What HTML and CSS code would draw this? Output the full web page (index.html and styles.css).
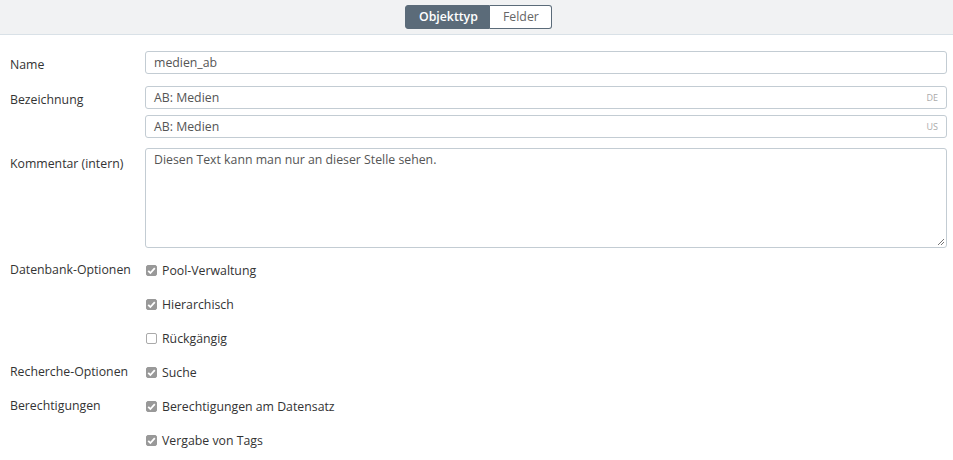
FILE: index.html
```html
<!DOCTYPE html>
<html lang="de">
<head>
<meta charset="utf-8">
<link rel="stylesheet" href="styles.css">
</head>
<body>
<div class="topbar">
  <div class="seg">
    <button class="seg-btn active">Objekttyp</button>
    <button class="seg-btn">Felder</button>
  </div>
</div>
<form class="form">
  <div class="row">
    <label class="lbl">Name</label>
    <div class="fields">
      <div class="input">medien_ab</div>
    </div>
  </div>
  <div class="row">
    <label class="lbl">Bezeichnung</label>
    <div class="fields stack">
      <div class="input"><span>AB: Medien</span><span class="lang">DE</span></div>
      <div class="input"><span>AB: Medien</span><span class="lang">US</span></div>
    </div>
  </div>
  <div class="row row-ta">
    <label class="lbl">Kommentar (intern)</label>
    <div class="fields">
      <div class="textarea">Diesen Text kann man nur an dieser Stelle sehen.
        <svg class="grip" width="8" height="8" viewBox="0 0 8 8"><path d="M7 1L1 7M7 4L4 7" stroke="#777" stroke-width="1"/></svg>
      </div>
    </div>
  </div>
  <div class="row checks">
    <label class="lbl">Datenbank-Optionen</label>
    <div class="fields">
      <div class="check"><span class="box on"><svg viewBox="0 0 13 13" width="13" height="13"><path d="M3.2 6.8L5.4 9L9.8 4.2" fill="none" stroke="#fff" stroke-width="1.8"/></svg></span>Pool-Verwaltung</div>
      <div class="check"><span class="box on"><svg viewBox="0 0 13 13" width="13" height="13"><path d="M3.2 6.8L5.4 9L9.8 4.2" fill="none" stroke="#fff" stroke-width="1.8"/></svg></span>Hierarchisch</div>
      <div class="check"><span class="box"></span>Rückgängig</div>
    </div>
  </div>
  <div class="row checks">
    <label class="lbl">Recherche-Optionen</label>
    <div class="fields">
      <div class="check"><span class="box on"><svg viewBox="0 0 13 13" width="13" height="13"><path d="M3.2 6.8L5.4 9L9.8 4.2" fill="none" stroke="#fff" stroke-width="1.8"/></svg></span>Suche</div>
    </div>
  </div>
  <div class="row checks">
    <label class="lbl">Berechtigungen</label>
    <div class="fields">
      <div class="check"><span class="box on"><svg viewBox="0 0 13 13" width="13" height="13"><path d="M3.2 6.8L5.4 9L9.8 4.2" fill="none" stroke="#fff" stroke-width="1.8"/></svg></span>Berechtigungen am Datensatz</div>
      <div class="check"><span class="box on"><svg viewBox="0 0 13 13" width="13" height="13"><path d="M3.2 6.8L5.4 9L9.8 4.2" fill="none" stroke="#fff" stroke-width="1.8"/></svg></span>Vergabe von Tags</div>
    </div>
  </div>
</form>
</body>
</html>
```
FILE: styles.css
```css
* { box-sizing: border-box; }
html, body { margin: 0; padding: 0; background: #fff; }
body {
  font-family: "Open Sans", "Noto Sans", sans-serif;
  font-size: 12.3px;
  color: #333;
  width: 953px;
  height: 460px;
  overflow: hidden;
}
.topbar {
  height: 35px;
  background: #f1f2f3;
  border-bottom: 1px solid #d9e1e7;
  display: flex;
  justify-content: center;
  padding-top: 5px;
}
.seg {
  display: flex;
  height: 24px;
  margin-left: 4px;
}
.seg-btn {
  font-family: inherit;
  font-size: 12.3px;
  padding: 0 13px;
  border: 1px solid #5b6b79;
  background: #fff;
  color: #666;
  margin: 0;
  line-height: 22px;
}
.seg-btn:first-child {
  border-radius: 3px 0 0 3px;
}
.seg-btn:last-child {
  border-radius: 0 3px 3px 0;
  border-left: none;
  width: 62px;
}
.seg-btn.active {
  background: #5b6b79;
  color: #fff;
  font-weight: 600;
  width: 85px;
}
.form {
  padding: 16px 6px 0 10px;
}
.row {
  display: grid;
  grid-template-columns: 135px 1fr;
  margin-bottom: 12px;
}
.row-ta {
  margin-bottom: 5px;
}
.lbl {
  line-height: 19px;
  padding-top: 4px;
}
.fields.stack {
  display: flex;
  flex-direction: column;
  gap: 6px;
}
.input {
  height: 23px;
  border: 1px solid #c3ccd3;
  border-radius: 3px;
  padding: 0 8px;
  color: #555;
  line-height: 21px;
  display: flex;
  justify-content: space-between;
}
.lang {
  font-size: 9px;
  color: #aaa;
}
.textarea {
  position: relative;
  height: 100px;
  border: 1px solid #c3ccd3;
  border-radius: 3px;
  padding: 1px 8px 0;
  color: #555;
  line-height: 20px;
  margin-top: -2px;
}
.grip {
  position: absolute;
  right: 1px;
  bottom: 1px;
}
.row.checks {
  margin-bottom: 0;
}
.row.checks .lbl {
  line-height: 34px;
  padding-top: 0;
}
.check {
  height: 34px;
  display: flex;
  align-items: center;
  padding-left: 1px;
  gap: 5px;
}
.box {
  width: 11px;
  height: 11px;
  border: 1px solid #aaa;
  border-radius: 2px;
  background: #fff;
  display: inline-flex;
  align-items: center;
  justify-content: center;
  overflow: hidden;
}
.box.on {
  background: #999;
  border-color: #999;
}
.box svg { flex: none; }
```
